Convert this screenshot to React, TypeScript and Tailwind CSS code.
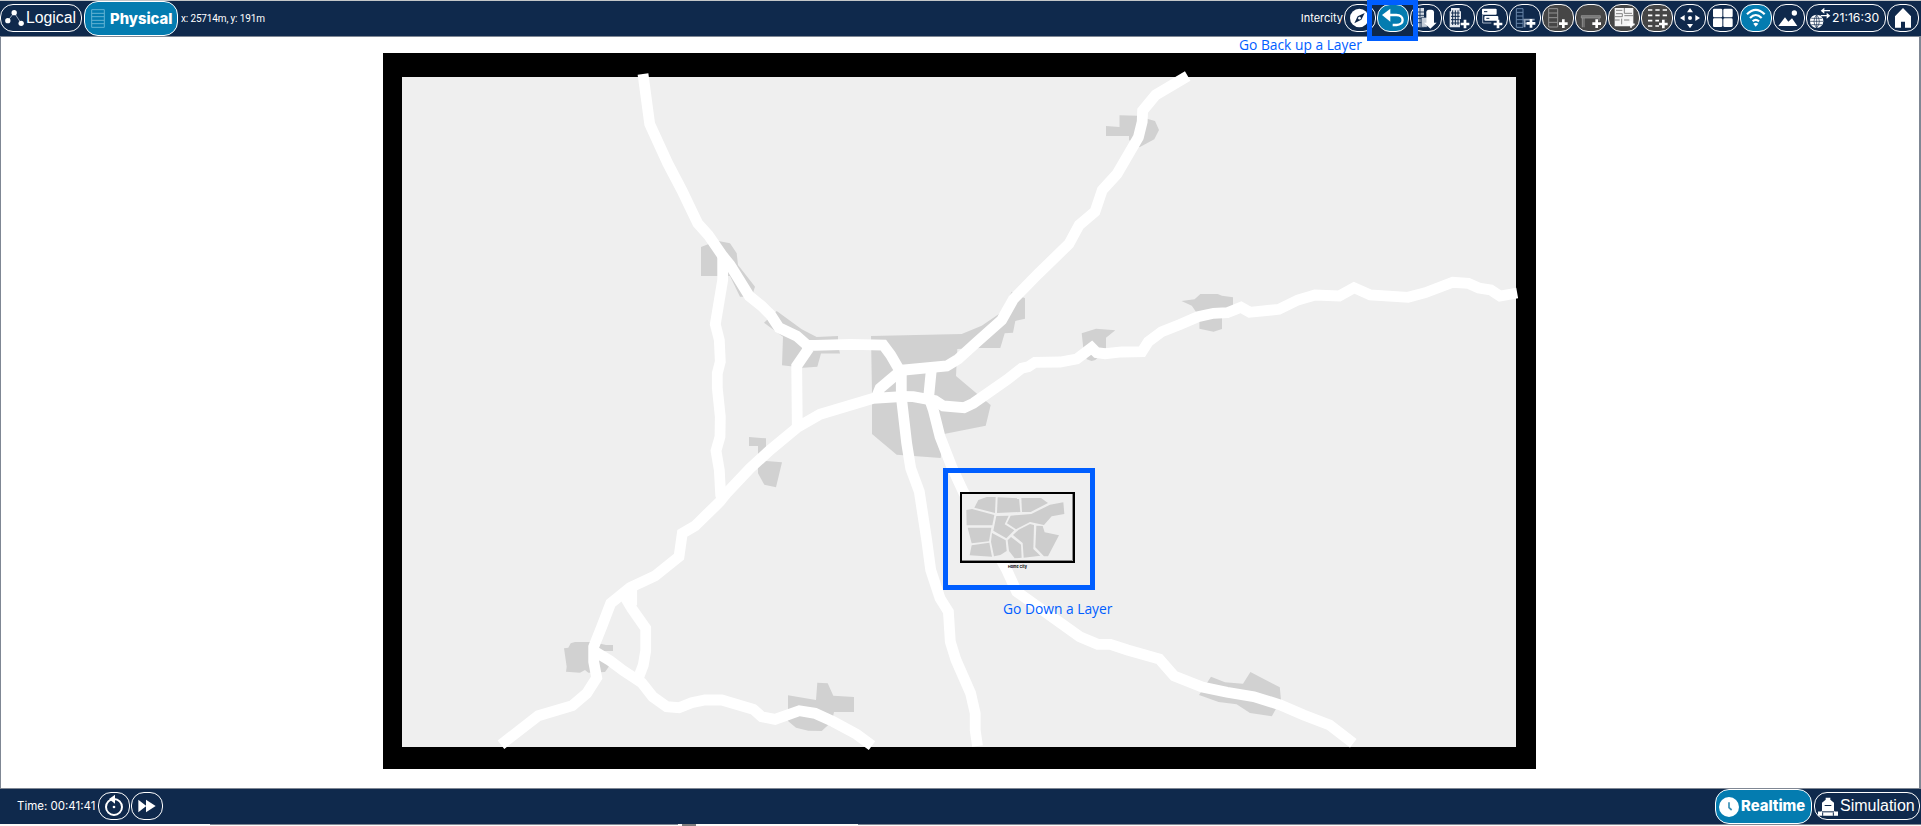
import type { ReactNode } from "react";

const areas = [
  "701,247 717,240.7 730,243.3 736.7,253.3 738,265 755,286.7 751.7,296.7 740,296.7 730,276 701,276",
  "764,322.7 776.7,311 801.7,329.3 816.7,337 838,336 838,345 840,353.5 821,353.5 817.3,366.7 803.3,367.7 782,365.3 783,336.7",
  "871,336 961.7,334 981.7,325.7 1000,313.3 1011.7,291.7 1014,293 1025,298.3 1025,318.7 1015.3,321 1013,332.7 1004.7,333.3 1000.3,348 980,348 957.3,349 956,376 977.3,394 990.7,405 985.7,425.7 944,434 940.7,458 896.7,454.7 872,434 872,393",
  "1081.7,333.3 1096,328.7 1115.3,330.3 1106,337.7 1106,350 1095.3,360 1091.7,361 1086.7,359.3 1083.3,348",
  "1106,126 1119.5,127 1119.5,115.3 1137.7,115.7 1148.8,119.3 1155,121 1159,130 1154.3,139.3 1139.5,147.3 1129,140 1129,136 1106,136",
  "1181.5,301 1194.6,299.3 1200.4,294 1217.6,294 1222,295.7 1233,297.3 1233,310 1222,316.7 1222,329 1213.5,331.7 1199.4,328.7 1199.4,316.7 1191.8,305.7",
  "749,437 766,438.3 766,461 782,462.3 776,487.3 764.3,484.7 758,473.3 758,446 749,446",
  "564,648.3 568.3,647.7 570.7,643.3 575,642 593.3,642 606,645 613,645 613,651 602,651 610,665 605,672 588.3,672.7 585,670 580,672.7 566,671.7 566.7,666.7",
  "788,695.3 816,700 817.3,682.7 827.7,683.3 833.3,695.7 854,697 854,712 834,712 831.7,721.7 821.7,731 808.3,730.7 796,727.7 788,721",
  "1199,695 1211,676.7 1225,682.3 1243,683.7 1250.4,672 1279.8,687.3 1281,700 1271.8,716.3 1250,713 1236.6,704.3 1218.6,702 1204,696.7",
];

const roads = [
  "643,74 649.7,124 667.7,163.3 681.7,190 697.7,223.3 708.3,235 722.7,256 730,265 749.3,296 761.7,306 770.7,315 779,327.7 796.7,336 808,346",
  "802,345.5 815,345.3 850,344.3 883.3,345 890.7,355 901.7,374",
  "809,348 796.7,366 797.3,427",
  "722.7,256 722.7,280 715.3,324.3 719.3,340 720.3,361.7 717.3,373.3 717.3,388 720.3,416.7 720,436.7 716,450.7 719.3,470 720.7,495 722,499",
  "905,396.3 873.3,398.3 820,414.3 798.3,426.7 770,450 750,468.3 726.7,493 720,501.5 695,526 682.3,533.3 679,556.7 655,576 630,587.7 610.7,603.3 601.7,626.7 593.7,646.7 593.7,661.7 596.7,677.7 586.7,693.3 572.3,705.7 538.3,715.7 501,744.7",
  "631.7,588 631.7,601 628,602 631.7,608.3 645.7,628.3 645.7,650.7 643.3,665 638,679",
  "595,651.7 610,660.7 623.3,670.7 641.7,682.7 652.7,696.7 666.7,706.7 679,707.7 691.7,702.7 705,700 721.7,700 753.3,709.3 761.7,716.7 775,719.3 799.3,710.7 815,713.3 833.3,721.7 856.7,734.3 872,745.7",
  "1187.7,76 1155.6,95 1142.6,110.7 1142.2,121.7 1138.4,137.3 1117,174 1102.3,190 1095,211.7 1079.2,225 1068.9,244 1037.9,274 1013.3,299.3 1001.7,320 976.7,342.3 958.3,359 946.7,366 899,370.5",
  "900,371.3 880,388.3 876,398",
  "901.3,371.3 901.3,396.7 906.7,443.3 910.7,468.3 919.3,491.7 926.7,540 930.7,570 940,598.3 948.4,611.7 950.3,641.7 956,660 970.6,693.3 975.2,713.3 975.2,730 977.5,746",
  "931.3,370 928.7,396.7 933.3,410 940,436.7 951.7,466.7 963.3,491.7 1006.7,570 1016.7,591.7 1079.7,636.7 1097.7,644.3 1110.3,644.3 1127.5,650 1159.3,659 1174.2,676 1202.2,687 1227,692.3 1253.8,696.7 1280.6,705 1303.6,715 1329.6,725 1353.3,743.3",
  "899,396.3 913.3,396.7 935,400.7 943.3,406 964,407.7 973.3,403.3 1006.7,380 1021.7,368.3 1028.3,366.7 1035,362.3 1060,362 1076.7,359 1091.7,347.7 1096.7,352.7 1105,353.7 1121.7,352 1142,351.7 1148.3,341.7 1161.7,331.7 1180,324.5 1198,316.7 1213.5,313.3 1227.3,312.7 1241,307.3 1249.7,312.3 1278.9,309.3 1297.9,300 1315,295 1339.2,296 1354,287.7 1370.2,295 1408,297.3 1425.3,292.7 1452.8,282.3 1468.3,283.3 1478.7,288 1490.7,290 1500,296 1517.2,293",
];

const blocks = [
  "475,810 500,801 527,801 525,849 463,833",
  "533,802 597,805 601,846 531,849",
  "604,804 663,804 684,819 632,846 606,846",
  "439,840 456,837 523,855 517,886 440,886",
  "443,893 514,893 507,934 455,940",
  "455,946 508,938 516,980 449,976",
  "529,858 566,857 554,883 583,901 559,925 520,902",
  "572,857 634,852 690,824 730,817 733,852 695,859 672,885 630,876 588,898 561,880",
  "516,909 557,931 560,963 541,975 522,979 513,935",
  "563,931 573,921 603,944 605,983 584,985 567,963",
  "579,915 596,899 630,882 642,885 640,957 661,977 611,983 608,939",
  "649,887 668,888 674,907 717,916 684,979 672,979 646,952",
];

type Tone = "navy" | "blue" | "grey";

const tones: Record<Tone, string> = {
  navy: "bg-[#0f294c]",
  blue: "bg-[#047cb0]",
  grey: "bg-[#464646]",
};

function IconButton({ tone = "navy", children }: { tone?: Tone; children: ReactNode }) {
  return (
    <button className={`h-7 w-8 shrink-0 overflow-hidden rounded-[13px] border border-white ${tones[tone]}`}>
      <svg viewBox="3 3 90 78" className="block h-[26px] w-[30px]" fill="#fff">
        {children}
      </svg>
    </button>
  );
}

function Plus({ x, y }: { x: number; y: number }) {
  return <path d={`M${x - 13} ${y}H${x + 13}M${x} ${y - 13}V${y + 13}`} stroke="#fff" strokeWidth="8" />;
}

function Toolbar() {
  return (
    <div className="flex h-7 items-center gap-px">
      <IconButton>
        <circle cx="46" cy="42" r="28" />
        <path d="M62 27L52 47L31 58L41 37Z" fill="#0f294c" />
        <circle cx="46.5" cy="42.5" r="4" />
      </IconButton>
      <IconButton tone="blue">
        <path d="M15 33L40 14V53Z" />
        <path d="M36 33H58C84 34 82 63 59 63H47" fill="none" stroke="#fff" strokeWidth="7" />
      </IconButton>
      <IconButton>
        <path d="M20 12H42V70H20Z" fill="#d5dbe3" />
        <path d="M20 24H42M20 34H42M20 44H42M20 56H42M30 12V70" stroke="#0f294c" strokeWidth="2.5" />
        <path d="M34 40H52V70H34Z" fill="#c6ced8" stroke="#0f294c" strokeWidth="2" />
        <rect x="49" y="17" width="23" height="48" rx="8" />
        <path d="M42 56H80L61 74Z" />
      </IconButton>
      <IconButton>
        <path d="M24 12H50V22H54V70H20V22H24Z" fill="#e4e8ee" />
        <path d="M24 27H50M24 37H50M24 47H50M24 57H50M29 19V63M37 19V63M45 19V63" stroke="#0f294c" strokeWidth="3" />
        <path d="M51 45H84V77H51Z" fill="#0f294c" />
        <Plus x={66} y={60} />
      </IconButton>
      <IconButton>
        <rect x="18" y="14" width="44" height="18" rx="3" />
        <path d="M24 23H34" stroke="#0f294c" strokeWidth="3" />
        <rect x="25" y="36" width="42" height="14" rx="3" />
        <path d="M20 32V57H46" fill="none" stroke="#a9b5c5" strokeWidth="3" />
        <path d="M31 43H40" stroke="#0f294c" strokeWidth="3" />
        <Plus x={66} y={60} />
      </IconButton>
      <IconButton>
        <path d="M22 14H42V70H22ZM22 25H42M22 36H42M22 47H42M22 58H42" fill="none" stroke="#6986a9" strokeWidth="3" />
        <path d="M43 47H77M47 47V70M47 58H60" fill="none" stroke="#91a2b8" strokeWidth="5" />
        <Plus x={66} y={58} />
      </IconButton>
      <IconButton tone="grey">
        <path d="M20 14H47V69H20ZM20 27H47M20 41H47M20 55H47" fill="none" stroke="#929292" strokeWidth="3" />
        <Plus x={64} y={59} />
      </IconButton>
      <IconButton tone="grey">
        <path d="M19 35H76V42H19Z" fill="#777" stroke="#a0a0a0" strokeWidth="2" />
        <path d="M22 42V70M27 42V70M72 42V50" fill="none" stroke="#929292" strokeWidth="3" />
        <Plus x={65} y={59} />
      </IconButton>
      <IconButton tone="grey">
        <path d="M20 12H76V67H20Z" fill="#f5f5f5" />
        <path d="M24 19H43M49 12V28H72M24 29H43V38H20M49 35H76M20 48H35M41 44V61M48 48H64" fill="none" stroke="#6d6d6d" strokeWidth="2.5" />
        <path d="M58 61H80M69 51V71" stroke="#fff" strokeWidth="5" />
      </IconButton>
      <IconButton tone="grey">
        <path d="M21 18H80M21 34H80M21 50H80M21 66H56" stroke="#fff" strokeWidth="5" strokeDasharray="13 9" />
        <path d="M54 46H82V77H54Z" fill="#464646" />
        <Plus x={67} y={60} />
      </IconButton>
      <IconButton>
        <circle cx="48" cy="42" r="6" />
        <path d="M48 12L57 25H39ZM48 73L57 60H39ZM18 42L32 33V51ZM78 42L64 33V51Z" />
      </IconButton>
      <IconButton>
        <rect x="18" y="14" width="28" height="26" rx="4" />
        <rect x="49" y="14" width="28" height="26" rx="4" />
        <rect x="18" y="43" width="28" height="26" rx="4" />
        <rect x="49" y="43" width="28" height="26" rx="4" />
      </IconButton>
      <IconButton tone="blue">
        <path d="M21 31Q47 4 74 31M30 42Q47 24 65 42M38 52Q47 43 57 52" fill="none" stroke="#fff" strokeWidth="6.5" />
        <path d="M40 59Q47 53 55 59L47 68Z" />
      </IconButton>
      <IconButton>
        <path d="M16 66L36 40L46 53L57 43L73 66Z" />
        <circle cx="64" cy="27" r="8" />
      </IconButton>
      <button className="flex h-7 w-20 shrink-0 items-center rounded-[13px] border border-white bg-[#0f294c] pl-[3px]">
        <svg viewBox="0 0 66 66" className="h-[22px] w-[22px] shrink-0">
          <circle cx="20" cy="43" r="20" fill="#fff" />
          <path d="M20 23V63M0 43H40M4 34H36M4 53H36M20 23Q4 43 20 63Q36 43 20 23" fill="none" stroke="#0f294c" strokeWidth="2" />
          <path d="M36 11H60M32 26H56" stroke="#fff" strokeWidth="4" />
          <path d="M43 2V20L32 11ZM50 17V35L61 26Z" fill="#fff" />
        </svg>
        <span className="text-[12.2px] leading-4 text-white">21:16:30</span>
      </button>
      <IconButton>
        <path d="M48 12L72 37V71H54V53H42V71H24V37Z" />
      </IconButton>
    </div>
  );
}

function Header() {
  return (
    <header className="flex h-[37px] shrink-0 items-center border-t border-b border-t-[#c3c6c8] border-b-[#7f8794] bg-[#0f294c] text-white">
      <button className="mb-px flex h-7 w-[82px] shrink-0 items-center rounded-[13px] border border-white pl-1">
        <svg viewBox="0 0 56 48" className="h-4 w-[19px] shrink-0" fill="#fff">
          <path d="M8 32L27 8L48 40" fill="none" stroke="#9ba9bb" strokeWidth="3" />
          <circle cx="8" cy="32" r="8" />
          <circle cx="27" cy="8" r="8" />
          <circle cx="48" cy="40" r="8" />
        </svg>
        <span className="ml-[2px] font-['Liberation_Sans',sans-serif] text-[15.8px] leading-5">Logical</span>
      </button>
      <button className="ml-[2px] flex h-[35px] w-[94px] shrink-0 items-center rounded-[14px] border border-white bg-[#047cb0] pl-[6px]">
        <svg viewBox="0 0 42 57" className="h-[19px] w-[14px] shrink-0" fill="none" stroke="#63b2d2" strokeWidth="3">
          <path d="M2 2H40V55H2ZM2 13H40M2 23H40M2 34H40M2 44H40" />
        </svg>
        <span className="ml-[5px] text-[14.8px] leading-5 font-extrabold">Physical</span>
      </button>
      <span className="ml-[3px] font-['Roboto',sans-serif] text-[10px] leading-4 tracking-[-0.15px]">x: 25714m, y: 191m</span>
      <div className="mr-[2px] mb-px ml-auto flex items-center gap-px">
        <span className="text-[11px] leading-4">Intercity</span>
        <Toolbar />
      </div>
    </header>
  );
}

function CityMap() {
  return (
    <svg viewBox="383 53 1153 716" className="block h-[716px] w-[1153px]">
      <rect x="383" y="53" width="1153" height="716" fill="#000" />
      <rect x="402" y="77" width="1114" height="670" fill="#efefef" />
      {areas.map((points) => (
        <polygon key={points} points={points} fill="#d1d1d1" />
      ))}
      {roads.map((points) => (
        <polyline key={points} points={points} fill="none" stroke="#fff" strokeWidth="10.8" strokeLinejoin="miter" />
      ))}
    </svg>
  );
}

function HomeCity() {
  return (
    <div className="absolute top-[468px] left-[943px] flex h-[122px] w-[152px] flex-col items-start border-[5px] border-[#005eff] pt-[19px] pl-3">
      <svg viewBox="420 786 345 213" className="block h-[71px] w-[115px] shrink-0">
        <rect x="423" y="789" width="339" height="207" fill="#efefef" stroke="#000" strokeWidth="6" />
        <path d="M426 991.5H757.5V792" fill="none" stroke="#8b8b8b" strokeWidth="3" />
        {blocks.map((points) => (
          <polygon key={points} points={points} fill="#cdcdcd" />
        ))}
      </svg>
      <span className="mt-px w-[115px] text-center text-[3.7px] leading-[5px] font-bold text-black">Home City</span>
    </div>
  );
}

function Footer() {
  return (
    <footer className="shrink-0">
      <div className="flex h-9 items-center border-t border-[#7f8794] bg-[#0f294c] text-white">
        <span className="mb-px w-[98px] shrink-0 pl-[17px] text-[11.5px] leading-4 whitespace-nowrap">Time: 00:41:41</span>
        <div className="mb-[2px] flex gap-px">
          <IconButton>
            <circle cx="48" cy="45" r="24" fill="none" stroke="#fff" strokeWidth="6" />
            <path d="M33 21L51 8V35Z" />
            <circle cx="48" cy="45" r="4" />
          </IconButton>
          <IconButton>
            <path d="M22 23L46 42L22 61ZM45 23L74 42L45 61Z" />
          </IconButton>
        </div>
        <button className="ml-auto flex h-[35px] w-[97px] shrink-0 items-center rounded-[14px] border border-white bg-[#047cb0] pl-[3px]">
          <svg viewBox="0 0 60 60" className="h-5 w-5 shrink-0">
            <circle cx="30" cy="30" r="30" fill="#fff" />
            <path d="M30 16V32L38 39" fill="none" stroke="#398fb5" strokeWidth="5" />
          </svg>
          <span className="ml-[2px] mb-px text-[14.8px] leading-5 font-extrabold">Realtime</span>
        </button>
        <button className="mr-px mb-px ml-[2px] flex h-7 w-[106px] shrink-0 items-center rounded-[13px] border border-white pl-[3px]">
          <svg viewBox="0 0 60 56" className="h-[19px] w-5 shrink-0" fill="#fff">
            <path d="M23 2H37V8L48 17V43H12V17L23 8ZM0 43H10L14 38H46L50 43H60V56H0Z" />
            <path d="M20 25H40M12 44H48M14 46V56M46 46V56" stroke="#0f294c" strokeWidth="3" />
          </svg>
          <span className="ml-[2px] font-['Liberation_Sans',sans-serif] text-[16px] leading-5">Simulation</span>
        </button>
      </div>
      <div className="flex h-[2px] bg-[#fbfaf8]">
        <div className="ml-[210px] h-px w-[468px] bg-[#7f8794]" />
        <div className="ml-1 h-[2px] w-[14px] bg-[#7c7c7c]" />
        <div className="ml-[162px] h-px flex-1 bg-[#7f8794]" />
      </div>
    </footer>
  );
}

export default function App() {
  return (
    <div className="relative flex h-[826px] w-[1921px] flex-col overflow-hidden bg-white font-['Inter','Roboto',sans-serif]">
      <Header />
      <main className="flex-1 border-r-2 border-l border-r-[#7f8794] border-l-[#7f8794] pt-4 pl-[382px]">
        <CityMap />
      </main>
      <Footer />
      <div className="absolute top-0 left-[1367px] h-[41px] w-[51px] border-[5px] border-[#005eff]" />
      <span className="absolute top-[35px] left-[1239px] font-['Open_Sans',sans-serif] text-[13.8px] leading-5 whitespace-nowrap text-[#005eff]">
        Go Back up a Layer
      </span>
      <HomeCity />
      <span className="absolute top-[599px] left-[1003px] font-['Open_Sans',sans-serif] text-[13.8px] leading-5 whitespace-nowrap text-[#005eff]">
        Go Down a Layer
      </span>
    </div>
  );
}
